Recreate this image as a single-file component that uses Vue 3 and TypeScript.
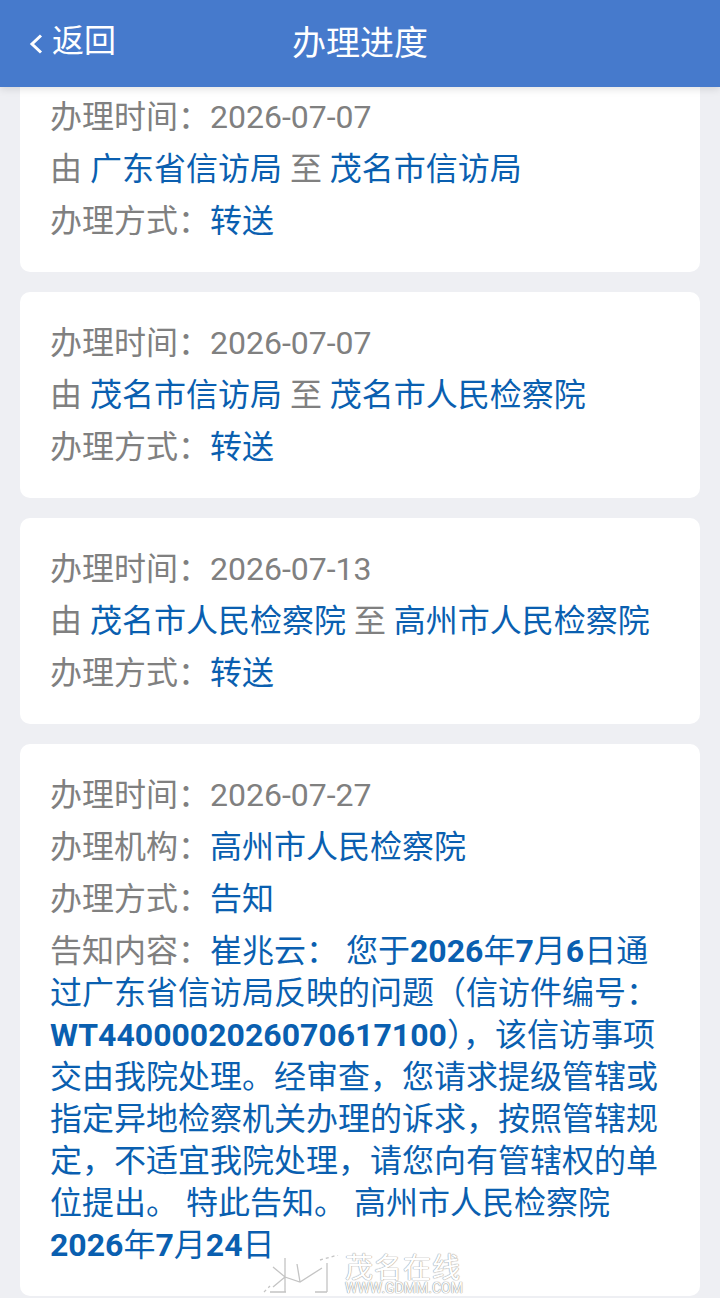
<script setup lang="ts">
interface Step {
  date: string;
  from?: string;
  to?: string;
  org?: string;
  method: string;
}

const steps: Step[] = [
  { date: "2026-07-07", from: "广东省信访局", to: "茂名市信访局", method: "转送" },
  { date: "2026-07-07", from: "茂名市信访局", to: "茂名市人民检察院", method: "转送" },
  { date: "2026-07-13", from: "茂名市人民检察院", to: "高州市人民检察院", method: "转送" },
  { date: "2026-07-27", org: "高州市人民检察院", method: "告知" },
];
</script>

<template>
  <div class="page">
    <header class="bar">
      <div class="back">
        <svg width="14" height="22" viewBox="0 0 14 22">
          <path d="M12 2.5 L3 11 L12 19.5" fill="none" stroke="#fff" stroke-width="3" />
        </svg>
        <span>返回</span>
      </div>
      <h1>办理进度</h1>
    </header>

    <main class="list">
      <section v-for="(s, i) in steps" :key="i" class="card">
        <p>办理时间：<span class="date">{{ s.date }}</span></p>
        <p v-if="s.from">由 <span class="val">{{ s.from }}</span> 至 <span class="val">{{ s.to }}</span></p>
        <p v-else>办理机构：<span class="val">{{ s.org }}</span></p>
        <p>办理方式：<span class="val">{{ s.method }}</span></p>
        <p v-if="s.org">告知内容：<span class="val">崔兆云： 您于<b>2026</b>年<b>7</b>月<b>6</b>日通过广东省信访局反映的问题（信访件编号：<b>WT4400002026070617100</b>），该信访事项交由我院处理。经审查，您请求提级管辖或指定异地检察机关办理的诉求，按照管辖规定，不适宜我院处理，请您向有管辖权的单位提出。 特此告知。 高州市人民检察院 <b>2026</b>年<b>7</b>月<b>24</b>日</span></p>
      </section>
    </main>

    <div class="mark">
      <svg width="78" height="40" viewBox="0 0 78 40">
        <g fill="none" stroke="#c4c4c4" stroke-width="1.3">
          <path d="M23 3 V37 M11 12 L23 22 L38 27 L60 13 M23 22 L11 32 M38 27 L35 9" />
          <path d="M65 8 V37 M8 37 H24 M53 37 H65" />
          <path d="M58 5 L76 0 M2 37 L8 31" stroke-dasharray="3 3" />
        </g>
      </svg>
      <div class="mark-text">
        <div class="mark-cn">茂名在线</div>
        <div class="mark-en">WWW.GDMM.COM</div>
      </div>
    </div>
  </div>
</template>

<style scoped>
.page {
  position: relative;
  height: 1298px;
  overflow: hidden;
  background: #eeeff3;
  font-family: Roboto, "Noto Sans CJK SC", sans-serif;
  font-size: 32px;
  color: #808080;
}
.bar {
  position: absolute;
  top: 0;
  left: 0;
  right: 0;
  height: 87px;
  background: #467acc;
  color: #fff;
  display: flex;
  align-items: center;
  justify-content: center;
  box-shadow: 0 2px 8px rgba(0, 0, 0, .12);
  z-index: 2;
}
.bar h1 { margin: 0 0 7px; font-size: 34px; font-weight: 400; }
.back {
  position: absolute;
  left: 29px;
  top: 20px;
  display: flex;
  align-items: center;
  gap: 9px;
  line-height: 42px;
}
.back svg { margin-top: 6px; }
.list {
  padding: 66px 20px 0;
  display: flex;
  flex-direction: column;
  gap: 20px;
}
.card {
  background: #fff;
  border-radius: 10px;
  padding: 30px 31px 30px 30px;
  display: flex;
  flex-direction: column;
  gap: 10px;
}
.card p { margin: 0; line-height: 42px; }
.date { color: #808080; }
.val { color: #0a5fb0; }
.val b { font-weight: 700; }
.mark {
  position: absolute;
  left: 262px;
  top: 1255px;
  display: flex;
  pointer-events: none;
}
.mark-text { width: 116px; margin-left: 5px; }
.mark-cn {
  font-size: 28px;
  line-height: 27px;
  letter-spacing: 1px;
  color: #fff;
  text-shadow: 0 0 1px #aaa, 0 0 1px #aaa, 0 0 1px #aaa;
}
.mark-en {
  font-size: 14px;
  line-height: 13px;
  color: #fff;
  text-shadow: 0 0 1px #888, 0 0 1px #888;
  white-space: nowrap;
}
</style>
